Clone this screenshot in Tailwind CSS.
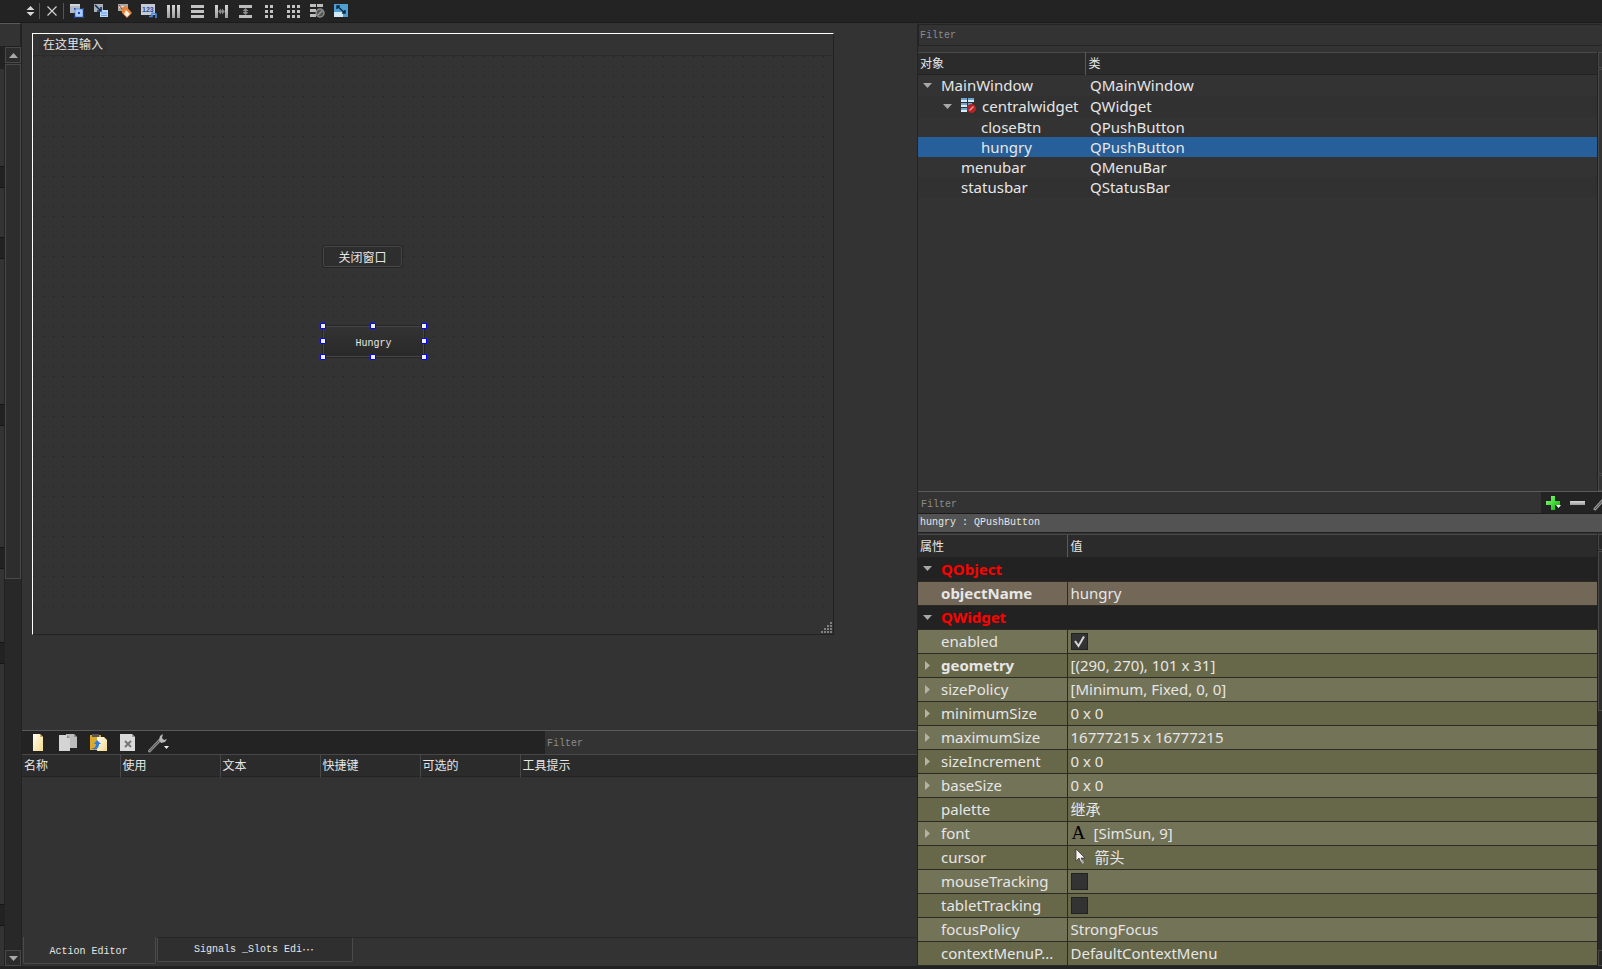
<!DOCTYPE html>
<html lang="zh-CN">
<head>
<meta charset="utf-8">
<title>Qt Designer</title>
<script src="https://cdn.jsdelivr.net/npm/@tailwindcss/browser@4"></script>
</head>
<body class="flex h-screen flex-col overflow-hidden bg-[#232323] font-['Noto_Sans','Noto_Sans_CJK_SC',sans-serif] text-[15px] text-[#e6e6e6]">

<svg class="absolute size-0" aria-hidden="true">
  <defs>
    <linearGradient id="silver" x1="0" y1="0" x2="0" y2="1"><stop offset="0" stop-color="#d8d8d8"/><stop offset="1" stop-color="#9c9c9c"/></linearGradient>
    <linearGradient id="green" x1="0" y1="0" x2="1" y2="1"><stop offset="0" stop-color="#8cff7a"/><stop offset="1" stop-color="#00b400"/></linearGradient>
    <linearGradient id="cream" x1="0" y1="0" x2="1" y2="1"><stop offset="0" stop-color="#fffdf0"/><stop offset="1" stop-color="#f3d98a"/></linearGradient>
    <pattern id="dots" width="10" height="10" patternUnits="userSpaceOnUse"><rect width="1" height="1" fill="#202020"/></pattern>
    <symbol id="down" viewBox="0 0 9 5"><path d="M0 0h9L4.500 5z" fill="#a8a8a8"/></symbol>
    <symbol id="up" viewBox="0 0 9 5"><path d="M0 5h9L4.500 0z" fill="#a8a8a8"/></symbol>
    <symbol id="right" viewBox="0 0 5 9"><path d="M0 0v9L5 4.500z" fill="#b4b4a4"/></symbol>
  </defs>
</svg>

<!-- Toolbar -->
<header class="flex h-[23px] shrink-0 items-center border-b border-[#1b1b1b] bg-[#232323] pl-[25px]">
  <button aria-label="Spin" class="w-[11px]"><svg class="h-3 w-[11px]" viewBox="0 0 11 12"><path d="M1.500 5L5.500 1l4 4zM1.500 7l4 4 4-4z" fill="#d8d8d8"/></svg></button>
  <span class="ml-[3px] h-4 w-px bg-[#555]"></span>
  <button aria-label="Close" class="ml-[6px]"><svg class="size-3" viewBox="0 0 12 12"><path d="M1.500 1.500l9 9m0-9l-9 9" stroke="#d0d0d0" stroke-width="1.200"/></svg></button>
  <span class="ml-[5px] h-4 w-px bg-[#555]"></span>
  <div class="ml-[5px] flex gap-2">
    <button aria-label="Edit Widgets"><svg class="size-4" viewBox="0 0 16 16"><rect x="1" y="1" width="10" height="9" fill="#b5b9c2"/><path d="M1 1h10v2H1z" fill="#d2d5db"/><rect x="6" y="6" width="8" height="8" fill="#a9cbff" stroke="#3b6fd0" stroke-width=".6"/><path d="M5 5h1.500v1.500H5zM13.500 5H15v1.500h-1.500zM5 13.500h1.500V15H5zM13.500 13.500H15V15h-1.500zM9 9h2v2H9z" fill="#1c4fc0"/></svg></button>
    <button aria-label="Edit Signals/Slots"><svg class="size-4" viewBox="0 0 16 16"><path d="M1 1h9v8H1z" fill="#aab0b8"/><path d="M7 7h8v7H7z" fill="#b9d6ff"/><path d="M8 10h6M8 12.500h6" stroke="#6d9be0"/><path d="M2 2l6 6m0-4v4H4" stroke="#15305e" stroke-width="1.600" fill="none"/></svg></button>
    <button aria-label="Edit Buddies"><svg class="size-4" viewBox="0 0 16 16"><path d="M1 1h10v7H1z" fill="#a8a8a8"/><path d="M2 3h5v2H2z" fill="#ddd"/><path d="M4 5l5-2 6 7-5 5-5-5z" fill="#e8833a"/><path d="M9 7l4 4-3 3-3-3z" fill="#fff0dc"/><path d="M2 2l3 4" stroke="#b33a10"/></svg></button>
    <button aria-label="Edit Tab Order"><svg class="size-4" viewBox="0 0 16 16"><rect x="0" y="1" width="14" height="11" fill="#c4cbd6"/><text x="1" y="9" font-family="Liberation Sans" font-size="7" font-weight="700" fill="#1f4e9c">123</text><path d="M8 13.500h3V10M10 11l2-1 3 1v4" stroke="#4b8be8" stroke-width="1.600" fill="none"/></svg></button>
    <button aria-label="Lay Out Horizontally"><svg class="size-4" viewBox="0 0 16 16"><path d="M2 2h3v13H2zM7 2h3v13H7zM12 2h3v13h-3z" fill="url(#silver)"/></svg></button>
    <button aria-label="Lay Out Vertically"><svg class="size-4" viewBox="0 0 16 16"><path d="M2 2h13v3H2zM2 7h13v3H2zM2 12h13v3H2z" fill="#c2c2c2"/></svg></button>
    <button aria-label="Horizontal Splitter"><svg class="size-4" viewBox="0 0 16 16"><path d="M2 2h3v13H2zM12 2h3v13h-3z" fill="url(#silver)"/><path d="M5 8.500l3-3v2h1v-2l3 3-3 3v-2H8v2z" fill="#8a8a8a"/></svg></button>
    <button aria-label="Vertical Splitter"><svg class="size-4" viewBox="0 0 16 16"><path d="M2 2h13v3H2zM2 12h13v3H2z" fill="#bdbdbd"/><path d="M8.500 5l3 3h-2v1h2l-3 3-3-3h2V8h-2z" fill="#8a8a8a"/></svg></button>
    <button aria-label="Form Layout"><svg class="size-4" viewBox="0 0 16 16"><path d="M4 2h3v3H4zM9 2h3v3H9zM4 7h3v3H4zM9 7h3v3H9zM4 12h3v3H4zM9 12h3v3H9z" fill="#c2c2c2"/></svg></button>
    <button aria-label="Grid Layout"><svg class="size-4" viewBox="0 0 16 16"><path d="M2 2h3v3H2zM7 2h3v3H7zM12 2h3v3h-3zM2 7h3v3H2zM7 7h3v3H7zM12 7h3v3h-3zM2 12h3v3H2zM7 12h3v3H7zM12 12h3v3h-3z" fill="#c2c2c2"/></svg></button>
    <button aria-label="Break Layout"><svg class="size-4" viewBox="0 0 16 16"><path d="M1 1h6v3H1zM8 1h6v3H8zM1 6h6v3H1zM1 11h6v3H1z" fill="#bdbdbd"/><circle cx="11" cy="10" r="4" fill="#555" stroke="#8c8c8c" stroke-width="1.500"/><path d="M8.500 12.500l5-5" stroke="#999" stroke-width="1.500"/></svg></button>
    <button aria-label="Adjust Size"><svg class="size-4" viewBox="0 0 16 16"><rect x="1" y="1" width="14" height="13" fill="#4f9fd2"/><path d="M1 9h9v5H1z" fill="#d5e9f6"/><path d="M4 3l8 7M4 6V3h3M12 7v3H9" stroke="#0c2f48" stroke-width="1.500" fill="none"/></svg></button>
  </div>
</header>

<main class="flex min-h-0 flex-1 bg-[#333]">

  <!-- Widget box edge -->
  <aside class="flex w-[22px] shrink-0 flex-col border-r border-[#222]">
    <div class="h-6 border-t border-r border-b border-t-[#5a5a5a] border-r-[#222] border-b-[#202020]"></div>
    <div class="flex min-h-0 flex-1">
      <div class="w-1 shrink-0 overflow-hidden">
        <div class="h-[22px] bg-[#222]"></div>
        <div class="mt-[97px] h-[22px] border-y border-[#161616] bg-[#222]"></div>
        <div class="mt-[49px] h-[22px] border-y border-[#161616] bg-[#222]"></div>
        <div class="mt-[145px] h-[22px] border-y border-[#161616] bg-[#222]"></div>
        <div class="mt-[121px] h-[22px] border-y border-[#161616] bg-[#222]"></div>
        <div class="mt-[73px] h-[22px] border-y border-[#161616] bg-[#222]"></div>
        <div class="mt-[240px] h-[22px] border-y border-[#161616] bg-[#222]"></div>
      </div>
      <div class="flex flex-1 flex-col border-l border-[#222] bg-[#282828]">
        <button aria-label="Scroll up" class="grid h-4 place-items-center border border-[#484848] bg-[#2c2c2c]"><svg class="h-[5px] w-[9px]"><use href="#up"/></svg></button>
        <div class="mt-px h-[56%] border border-[#484848] bg-[#2d2d2d]"></div>
        <button aria-label="Scroll down" class="mt-auto grid h-4 place-items-center border border-[#484848] bg-[#2c2c2c]"><svg class="h-[5px] w-[9px]"><use href="#down"/></svg></button>
      </div>
    </div>
  </aside>

  <div class="flex min-w-0 flex-1 flex-col">
    <!-- Form being designed -->
    <section class="min-h-0 flex-1 overflow-hidden pt-[10px] pl-[10px]">
      <div class="relative flex h-[602px] w-[802px] flex-col border border-t-white border-r-[#222] border-b-[#222] border-l-white">
        <div class="flex h-[22px] shrink-0 items-center border-b border-[#2b2b2b] pl-[6px]"><span class="bg-[#303030] px-1 pb-px font-['Noto_Sans_CJK_SC',sans-serif] text-[12px] leading-4">在这里输入</span></div>
        <svg class="h-[551px] w-full" aria-hidden="true"><rect width="100%" height="100%" fill="url(#dots)"/></svg>
        <button class="absolute top-[212px] left-[290px] h-[21px] w-[79px] rounded-xs border border-[#464646] bg-[#2e2e2e] font-['Noto_Sans_CJK_SC',sans-serif] text-[12px] leading-4 outline outline-[#262626]">关闭窗口</button>
        <button class="absolute top-[292px] left-[290px] h-[31px] w-[101px] border border-[#464646] bg-linear-to-b from-[#333] to-[#292929] pt-[3px] font-['Liberation_Mono',monospace] text-[10px] outline outline-[#262626]">Hungry</button>
        <svg class="absolute top-[289px] left-[287px] h-[37px] w-[107px]" viewBox="0 0 107 37" fill="#f0f0f0" stroke="#00f">
          <path d="M.5.5h5v5h-5zM50.500.5h5v5h-5zM101.500.5h5v5h-5zM.5 15.500h5v5h-5zM101.500 15.500h5v5h-5zM.5 31.500h5v5h-5zM50.500 31.500h5v5h-5zM101.500 31.500h5v5h-5z"/>
        </svg>
        <svg class="absolute right-px bottom-px h-[11px] w-[11px]" viewBox="0 0 11 11" fill="#808080"><path d="M9 0h2v2H9zM6 3h2v2H6zM9 3h2v2H9zM3 6h2v2H3zM6 6h2v2H6zM9 6h2v2H9zM0 9h2v2H0zM3 9h2v2H3zM6 9h2v2H6zM9 9h2v2H9z"/></svg>
      </div>
    </section>

    <!-- Action editor -->
    <section class="flex h-[236px] shrink-0 flex-col border-t border-[#5a5a5a]">
      <div class="flex h-[23px] shrink-0 bg-[#232323]">
        <div class="flex w-[523px] items-center gap-[10px] pl-[6px]">
          <button aria-label="New"><svg class="size-5" viewBox="0 0 20 20"><path d="M5 1h7l3 3v14H5z" fill="url(#cream)"/><path d="M12 1v3h3" fill="#c9ac55"/></svg></button>
          <button aria-label="Copy"><svg class="size-5" viewBox="0 0 20 20"><path d="M8 1h8l3 3v11H8z" fill="#bcbcbc"/><path d="M1 2h8l3 3v13H1z" fill="#d4d4d4"/><path d="M9 2v3h3M16 1v3h3" fill="#8a8a8a"/></svg></button>
          <button aria-label="Paste"><svg class="size-5" viewBox="0 0 20 20"><path d="M2 2h11v15H2z" fill="#dba92b"/><path d="M4 1h7v3H4z" fill="#555"/><path d="M9 4h7l3 3v11H9z" fill="url(#cream)"/><path d="M3 15c3 1 5-1 5-4H6l3-4 4 4h-2c0 5-4 7-8 4z" fill="#2f7be0"/></svg></button>
          <button aria-label="Delete"><svg class="size-5" viewBox="0 0 20 20"><path d="M2 1h12l3 3v14H2z" fill="#dadada"/><path d="M14 1v3h3" fill="#999"/><path d="M7 8l6 6m0-6l-6 6" stroke="#777" stroke-width="2"/></svg></button>
          <button aria-label="Configure"><svg class="h-5 w-[22px]" viewBox="0 0 22 20"><path d="M1.500 18L12 7" stroke="#8f8f8f" stroke-width="3" stroke-linecap="round"/><path d="M1.500 18L12 7" stroke="#555" stroke-width="1"/><path d="M15 1l-3 2-1 4 2 3 4-1 2-3-3 1-2-2z" fill="#b8b8b8"/><path d="M16 13h5l-2.500 3z" fill="#eee"/></svg></button>
        </div>
        <input aria-label="Filter actions" placeholder="Filter" class="min-w-0 flex-1 bg-[#333] px-[2px] pt-[2px] font-['Liberation_Mono',monospace] text-[10px] outline-none placeholder:text-[#8c8c8c]">
      </div>
      <table class="w-full table-fixed border-t border-[#484848] bg-[#2b2b2b]">
        <colgroup><col class="w-[98px]"><col class="w-[100px]"><col class="w-[100px]"><col class="w-[100px]"><col class="w-[100px]"><col></colgroup>
        <thead><tr class="h-[22px] border-b border-[#222] text-left font-['Noto_Sans_CJK_SC',sans-serif] text-[12px] leading-4 [&>th]:border-r [&>th]:border-[#484848] [&>th]:p-0 [&>th]:pb-[2px] [&>th]:pl-[2px] [&>th]:font-normal">
          <th>名称</th><th>使用</th><th>文本</th><th>快捷键</th><th>可选的</th><th class="border-r-0!">工具提示</th>
        </tr></thead>
      </table>
      <div class="flex-1"></div>
      <div class="flex h-[29px] shrink-0 items-start gap-px pl-[1px] font-['Liberation_Mono',monospace] text-[10px]">
        <button class="h-[27px] w-[133px] rounded-b-xs border border-t-0 border-[#4a4a4a] bg-[#333] pt-[2px] pr-[2px]">Action Editor</button>
        <div class="h-full flex-1 border-t border-[#272727]"><button class="h-6 w-[196px] rounded-b-xs border border-t-0 border-[#4a4a4a] bg-[#2f2f2f]"><span class="flex items-center justify-center pr-[2px] leading-4">Signals _Slots Edi<span class="font-['Noto_Sans_CJK_SC',sans-serif] text-[12px]">⋯</span></span></button></div>
      </div>
    </section>
  </div>

  <!-- Inspectors -->
  <aside class="flex w-[685px] shrink-0 flex-col border-l border-[#232323]">
    <section class="flex min-h-0 flex-1 flex-col">
      <input aria-label="Filter objects" placeholder="Filter" class="mt-px h-[22px] w-full shrink-0 rounded-xs border-y border-l border-[#242424] bg-[#333] px-px pt-px font-['Liberation_Mono',monospace] text-[10px] outline-none placeholder:text-[#8c8c8c]">
      <div class="mt-[6px] flex min-h-0 flex-1">
        <div class="min-w-0 flex-1">
          <table class="w-full table-fixed border-t border-[#484848]">
            <colgroup><col class="w-[167px]"><col></colgroup>
            <thead><tr class="h-[22px] border-b border-[#222] bg-[#2b2b2b] text-left font-['Noto_Sans_CJK_SC',sans-serif] text-[12px] leading-4 [&>th]:p-0 [&>th]:pb-[2px] [&>th]:font-normal">
              <th class="border-r border-[#5a5a5a]"><span class="pl-[2px]">对象</span></th><th><span class="pl-[3px]">类</span></th></tr></thead>
            <tbody class="leading-5 [&_td]:overflow-hidden [&_td]:p-0 [&_td]:whitespace-nowrap [&_td+td]:pl-[5px]">
              <tr class="h-[21px]"><td><div class="flex items-center pl-[5px]"><svg class="mr-[9px] h-[5px] w-[9px]"><use href="#down"/></svg>MainWindow</div></td><td>QMainWindow</td></tr>
              <tr class="h-[21px] bg-[#313131]"><td><div class="flex items-center pl-[25px]"><svg class="mr-2 h-[5px] w-[9px]"><use href="#down"/></svg><svg class="mr-[6px] size-4" viewBox="0 0 16 16"><path d="M1 0h6v4H1zM8 0h6v4H8zM1 5h6v4H1zM8 5h4v2H8zM1 10h6v4H1z" fill="#6ea5cc"/><path d="M1 2h6v2H1zM8 2h6v2H8zM1 7h6v2H1zM1 12h6v2H1z" fill="#d8eaf5"/><circle cx="11.500" cy="10.500" r="4.500" fill="#b32424"/><path d="M9.500 12.500l4-4" stroke="#e99" stroke-width="1.500"/></svg>centralwidget</div></td><td>QWidget</td></tr>
              <tr class="h-5"><td><div class="pl-[63px]">closeBtn</div></td><td>QPushButton</td></tr>
              <tr class="h-5 bg-[#265f99]"><td><div class="pl-[63px]">hungry</div></td><td>QPushButton</td></tr>
              <tr class="h-5"><td><div class="pl-[43px]">menubar</div></td><td>QMenuBar</td></tr>
              <tr class="h-5 bg-[#313131]"><td><div class="pl-[43px]">statusbar</div></td><td>QStatusBar</td></tr>
            </tbody>
          </table>
        </div>
        <div class="flex w-[5px] shrink-0 flex-col border-l border-[#222]">
          <div class="h-4 border-y border-l border-[#484848]"></div>
          <div class="mt-px flex-1 border-y border-l border-[#484848]"></div>
          <div class="mt-px h-4 border-y border-l border-[#484848]"></div>
        </div>
      </div>
    </section>

    <section class="flex h-[475px] shrink-0 flex-col border-t border-[#5a5a5a]">
      <div class="flex h-[22px] shrink-0 border-b border-[#1b1b1b] bg-[#232323]">
        <input aria-label="Filter properties" placeholder="Filter" class="min-w-0 flex-1 bg-[#333] px-[3px] pt-[3px] font-['Liberation_Mono',monospace] text-[10px] outline-none placeholder:text-[#8c8c8c]">
        <div class="flex w-[61px] shrink-0 items-center overflow-hidden">
          <button aria-label="Add property" class="ml-1 shrink-0"><svg class="size-4" viewBox="0 0 16 16"><path d="M6 1h4v5h5v4h-5v5H6v-5H1V6h5z" fill="url(#green)"/><path d="M11 10h5l-2.500 3z" fill="#fff"/></svg></button>
          <button aria-label="Remove property" class="ml-2 shrink-0"><svg class="size-4" viewBox="0 0 16 16"><path d="M1 6h15v4H1z" fill="url(#silver)"/></svg></button>
          <button aria-label="Configure" class="ml-2 shrink-0"><svg class="size-4" viewBox="0 0 16 16"><path d="M2 14L12 3" stroke="#999" stroke-width="3" stroke-linecap="round"/><path d="M2 14L12 3" stroke="#444"/></svg></button>
        </div>
      </div>
      <div class="flex h-[19px] shrink-0 items-center border-b border-[#222] bg-[#535353] pb-px pl-[2px] font-['Liberation_Mono',monospace] text-[10px] whitespace-pre">hungry : QPushButton</div>
      <div class="mt-px flex min-h-0 flex-1">
        <div class="min-w-0 flex-1 overflow-hidden border-t border-[#484848]">
          <table class="w-full table-fixed bg-[#222]">
            <colgroup><col class="w-[149px]"><col></colgroup>
            <thead><tr class="h-[22px] bg-[#2b2b2b] text-left font-['Noto_Sans_CJK_SC',sans-serif] text-[12px] leading-4 [&>th]:p-0 [&>th]:font-normal">
              <th class="border-r border-[#5a5a5a]"><span class="pl-[2px]">属性</span></th><th><span class="pl-[3px]">值</span></th></tr></thead>
            <tbody class="leading-5 [&>tr]:h-6 [&>tr]:border-b [&>tr]:border-[#2b2b24] [&_td]:overflow-hidden [&_td]:p-0 [&_td]:pl-[3px] [&_td]:whitespace-nowrap [&_th]:border-r [&_th]:border-[#2b2b24] [&_th]:p-0 [&_th]:text-left [&_th]:font-normal">
              <tr class="text-[#f00]"><th colspan="2" class="border-r-0!"><div class="flex items-center pl-[5px] font-bold"><svg class="mr-[9px] h-[5px] w-[9px]"><use href="#down"/></svg>QObject</div></th></tr>
              <tr class="bg-[#736757]"><th><div class="pl-[23px] font-bold">objectName</div></th><td>hungry</td></tr>
              <tr class="text-[#f00]"><th colspan="2" class="border-r-0!"><div class="flex items-center pl-[5px] font-bold"><svg class="mr-[9px] h-[5px] w-[9px]"><use href="#down"/></svg>QWidget</div></th></tr>
              <tr class="bg-[#737357]"><th><label for="enabled" class="block pl-[23px]">enabled</label></th><td><div class="grid size-[17px] border border-[#222] bg-[#333]"><input id="enabled" type="checkbox" checked class="peer col-start-1 row-start-1 size-[15px] appearance-none"><svg class="pointer-events-none invisible col-start-1 row-start-1 size-[15px] peer-checked:visible" viewBox="0 0 15 15"><path d="M3 7l3.500 5L12 2.500" stroke="#d8d8d8" stroke-width="2" fill="none"/></svg></div></td></tr>
              <tr class="bg-[#67674a]"><th><div class="flex items-center pl-[7px] font-bold"><svg class="mr-[11px] h-[9px] w-[5px]"><use href="#right"/></svg>geometry</div></th><td>[(290, 270), 101 x 31]</td></tr>
              <tr class="bg-[#737357]"><th><div class="flex items-center pl-[7px]"><svg class="mr-[11px] h-[9px] w-[5px]"><use href="#right"/></svg>sizePolicy</div></th><td>[Minimum, Fixed, 0, 0]</td></tr>
              <tr class="bg-[#67674a]"><th><div class="flex items-center pl-[7px]"><svg class="mr-[11px] h-[9px] w-[5px]"><use href="#right"/></svg>minimumSize</div></th><td>0 x 0</td></tr>
              <tr class="bg-[#737357]"><th><div class="flex items-center pl-[7px]"><svg class="mr-[11px] h-[9px] w-[5px]"><use href="#right"/></svg>maximumSize</div></th><td>16777215 x 16777215</td></tr>
              <tr class="bg-[#67674a]"><th><div class="flex items-center pl-[7px]"><svg class="mr-[11px] h-[9px] w-[5px]"><use href="#right"/></svg>sizeIncrement</div></th><td>0 x 0</td></tr>
              <tr class="bg-[#737357]"><th><div class="flex items-center pl-[7px]"><svg class="mr-[11px] h-[9px] w-[5px]"><use href="#right"/></svg>baseSize</div></th><td>0 x 0</td></tr>
              <tr class="bg-[#67674a]"><th><div class="pl-[23px]">palette</div></th><td>继承</td></tr>
              <tr class="bg-[#737357]"><th><div class="flex items-center pl-[7px]"><svg class="mr-[11px] h-[9px] w-[5px]"><use href="#right"/></svg>font</div></th><td><div class="flex items-center"><span class="w-[23px] pl-px font-['Liberation_Serif',serif] text-[19px] text-black">A</span>[SimSun, 9]</div></td></tr>
              <tr class="bg-[#67674a]"><th><div class="pl-[23px]">cursor</div></th><td><div class="flex items-center"><svg class="mr-2 size-4" viewBox="0 0 16 16"><path d="M5 0v12l3-3 2 5 2-1-2-4h4z" fill="#f4f4f4" stroke="#333" stroke-width=".7"/><path d="M10 11l1 4 2-1-1-3z" fill="#aaa"/></svg>箭头</div></td></tr>
              <tr class="bg-[#737357]"><th><label for="mouse" class="block pl-[23px]">mouseTracking</label></th><td><input id="mouse" type="checkbox" class="block size-[17px] appearance-none border border-[#222] bg-[#333]"></td></tr>
              <tr class="bg-[#67674a]"><th><label for="tablet" class="block pl-[23px]">tabletTracking</label></th><td><input id="tablet" type="checkbox" class="block size-[17px] appearance-none border border-[#222] bg-[#333]"></td></tr>
              <tr class="bg-[#737357]"><th><div class="pl-[23px]">focusPolicy</div></th><td>StrongFocus</td></tr>
              <tr class="bg-[#67674a]"><th><div class="pl-[23px] whitespace-nowrap">contextMenuP...</div></th><td>DefaultContextMenu</td></tr>
            </tbody>
          </table>
        </div>
        <div class="flex w-[5px] shrink-0 flex-col border-l border-[#222] bg-[#282828]">
          <div class="h-4 border-y border-l border-[#484848]"></div>
          <div class="mt-px h-40 border-y border-l border-[#484848] bg-[#2d2d2d]"></div>
          <div class="mt-auto h-4 border-y border-l border-[#484848]"></div>
        </div>
      </div>
    </section>
  </aside>
</main>
<footer class="h-[3px] shrink-0 bg-[#222]"></footer>
</body>
</html>
